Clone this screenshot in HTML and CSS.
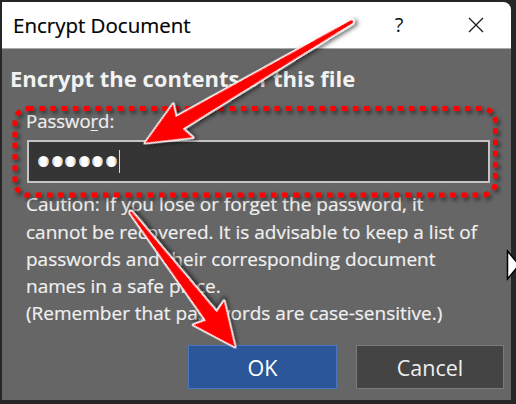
FILE: index.html
```html
<!DOCTYPE html>
<html>
<head>
<meta charset="utf-8">
<title>Encrypt Document</title>
<link rel="stylesheet" href="styles.css">
</head>
<body>
<div class="dialog">
  <div class="titlebar">
    <span class="title">Encrypt Document</span>
    <span class="help">?</span>
    <span class="close"><svg width="16" height="16" viewBox="0 0 16 16"><path d="M1 1L15 15M15 1L1 15" stroke="#1a1a1a" stroke-width="1.3" fill="none"/></svg></span>
  </div>
  <div class="content">
    <h1 class="heading">Encrypt the contents of this file</h1>
    <div class="group">
      <label class="label">Passwo<u>r</u>d:</label>
      <div class="input"><span class="dot"></span><span class="dot"></span><span class="dot"></span><span class="dot"></span><span class="dot"></span><span class="dot"></span><span class="caret"></span></div>
      <p class="caution">Caution: If you lose or forget the password, it<br>cannot be recovered. It is advisable to keep a list of<br>passwords and their corresponding document<br>names in a safe place.<br>(Remember that passwords are case-sensitive.)</p>
    </div>
    <div class="buttons">
      <button class="btn btn-ok">OK</button>
      <button class="btn btn-cancel">Cancel</button>
    </div>
  </div>
</div>
<svg class="annotations" width="516" height="404" viewBox="0 0 516 404">
  <defs>
    <filter id="sh" x="-30%" y="-30%" width="160%" height="160%">
      <feDropShadow dx="2" dy="2.5" stdDeviation="2" flood-color="#000" flood-opacity="0.6"/>
    </filter>
  </defs>
  <rect x="15" y="108.5" width="480.5" height="86.5" rx="13" fill="none" stroke="#ff0000" stroke-width="5" stroke-dasharray="5.5 5.7" filter="url(#sh)"/>
  <polygon class="arrow" points="0,0 44,-19.5 40,-7 240,-1.8 241.5,0 240,1.8 40,7 44,19.5" transform="translate(145,143) rotate(-30.4)" filter="url(#sh)"/>
  <polygon class="arrow" points="0,0 43,-19.5 39,-7 170,-1.3 171.5,0 170,1.3 39,7 43,19.5" transform="translate(235,347) rotate(-127.7)" filter="url(#sh)"/>
  <polygon points="507.5,251 519,265 507.5,279" fill="#fff" stroke="#000" stroke-width="1.5"/>
</svg>
</body>
</html>
```

FILE: styles.css
```css
html, body {
  margin: 0;
  padding: 0;
}

body {
  width: 516px;
  height: 404px;
  box-sizing: border-box;
  padding: 2px 5px 4px 2px;
  background: #262626;
  position: relative;
  overflow: hidden;
  font-family: "Open Sans", "Noto Sans", sans-serif;
}

.dialog {
  height: 100%;
  background: #666666;
  display: flex;
  flex-direction: column;
  border-top-right-radius: 8px;
  overflow: hidden;
}

.titlebar {
  height: 46px;
  flex-shrink: 0;
  background: #ffffff;
  border-bottom: 1px solid #a8a8a8;
  display: flex;
  align-items: center;
  padding: 0 12px 0 11px;
}

.title {
  flex: 1;
  font-size: 20.5px;
  line-height: 24px;
  color: #000;
  -webkit-text-stroke: 0.2px #000;
}

.help {
  width: 46px;
  text-align: center;
  font-size: 20px;
  line-height: 24px;
  color: #111;
}

.close {
  width: 46px;
  margin-left: 31px;
  display: flex;
  justify-content: center;
}

.content {
  flex: 1;
  display: flex;
  flex-direction: column;
  padding-left: 8px;
}

.heading {
  margin: 13.5px 0 0;
  font-size: 22px;
  line-height: 30px;
  font-weight: 700;
  color: #f2f2f2;
}

.group {
  padding-left: 16px;
}

.label {
  display: block;
  margin-top: 16.6px;
  font-size: 18.5px;
  line-height: 24px;
  color: #efefef;
  -webkit-text-stroke: 0.2px #efefef;
}

.label u {
  text-decoration-thickness: 1px;
  text-underline-offset: 2px;
}

.input {
  margin: 6.9px 0 0 1px;
  width: 463px;
  height: 43px;
  box-sizing: border-box;
  border: 2px solid #c4c4c4;
  background: #353535;
  display: flex;
  align-items: center;
  padding-left: 9px;
}

.dot {
  width: 11px;
  height: 11px;
  border-radius: 50%;
  margin-right: 2.6px;
  background: linear-gradient(90deg, #8fc0ff 0%, #ffffff 28%, #ffffff 72%, #f3b060 100%);
}

.dot:nth-child(6) {
  margin-right: 2px;
}

.caret {
  width: 1.5px;
  height: 23px;
  background: #d8d8d8;
}

.caution {
  margin: 8.3px 0 0;
  font-size: 19px;
  line-height: 27.3px;
  color: #f0f0f0;
  -webkit-text-stroke: 0.2px #f0f0f0;
}

.buttons {
  margin-top: 17.2px;
  display: flex;
  justify-content: flex-end;
  gap: 19px;
  padding-right: 7px;
}

.btn {
  height: 44px;
  box-sizing: border-box;
  padding: 3px 0 0;
  font-family: "Open Sans", "Noto Sans", sans-serif;
  font-size: 21.5px;
  line-height: 26px;
}

.btn-ok {
  width: 149px;
  background: #2b579a;
  border: 1px solid #4677c0;
  color: #ffffff;
}

.btn-cancel {
  width: 148px;
  background: #444444;
  border: 1px solid #7a7a7a;
  color: #f0f0f0;
}

.annotations {
  position: absolute;
  left: 0;
  top: 0;
  pointer-events: none;
}

.arrow {
  fill: #ff0000;
  stroke: #ffffff;
  stroke-width: 3;
  stroke-linejoin: round;
  paint-order: stroke;
}
```
